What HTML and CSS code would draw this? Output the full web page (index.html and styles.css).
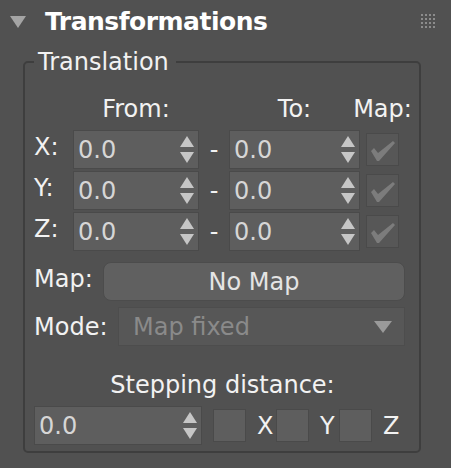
FILE: index.html
```html
<!DOCTYPE html>
<html>
<head>
<meta charset="utf-8">
<link rel="stylesheet" href="styles.css">
</head>
<body>
<div class="panel">
  <div class="rollout-head">
    <svg class="caret" width="16" height="12" viewBox="0 0 16 12"><polygon points="0,0 16,0 8,12"/></svg>
    <span class="title">Transformations</span>
    <svg class="grip" width="14" height="14" viewBox="0 0 14 14">
      <g fill="#8c8c8c">
        <rect x="0" y="0" width="2" height="2"/><rect x="4" y="0" width="2" height="2"/><rect x="8" y="0" width="2" height="2"/><rect x="12" y="0" width="2" height="2"/>
        <rect x="0" y="4" width="2" height="2"/><rect x="4" y="4" width="2" height="2"/><rect x="8" y="4" width="2" height="2"/><rect x="12" y="4" width="2" height="2"/>
        <rect x="0" y="8" width="2" height="2"/><rect x="4" y="8" width="2" height="2"/><rect x="8" y="8" width="2" height="2"/><rect x="12" y="8" width="2" height="2"/>
        <rect x="0" y="12" width="2" height="2"/><rect x="4" y="12" width="2" height="2"/><rect x="8" y="12" width="2" height="2"/><rect x="12" y="12" width="2" height="2"/>
      </g>
    </svg>
  </div>

  <fieldset class="group">
    <legend class="group-title">Translation</legend>

    <div class="xyz-grid">
      <span></span><span class="colhead">From:</span><span></span><span class="colhead">To:</span><span class="colhead map-head">Map:</span>

      <span class="axis-label">X:</span>
      <div class="spin"><span class="val">0.0</span><svg class="arrows" width="14" height="28" viewBox="0 0 14 28"><polygon points="7,0 14,11 0,11"/><polygon points="0,16 14,16 7,27"/></svg></div>
      <span class="dash">-</span>
      <div class="spin"><span class="val">0.0</span><svg class="arrows" width="14" height="28" viewBox="0 0 14 28"><polygon points="7,0 14,11 0,11"/><polygon points="0,16 14,16 7,27"/></svg></div>
      <div class="check"><svg width="33" height="33" viewBox="0 0 33 33"><polygon points="5,18 8,15 12,20 27,8 29,10 13,28 11,28"/></svg></div>

      <span class="axis-label">Y:</span>
      <div class="spin"><span class="val">0.0</span><svg class="arrows" width="14" height="28" viewBox="0 0 14 28"><polygon points="7,0 14,11 0,11"/><polygon points="0,16 14,16 7,27"/></svg></div>
      <span class="dash">-</span>
      <div class="spin"><span class="val">0.0</span><svg class="arrows" width="14" height="28" viewBox="0 0 14 28"><polygon points="7,0 14,11 0,11"/><polygon points="0,16 14,16 7,27"/></svg></div>
      <div class="check"><svg width="33" height="33" viewBox="0 0 33 33"><polygon points="5,18 8,15 12,20 27,8 29,10 13,28 11,28"/></svg></div>

      <span class="axis-label">Z:</span>
      <div class="spin"><span class="val">0.0</span><svg class="arrows" width="14" height="28" viewBox="0 0 14 28"><polygon points="7,0 14,11 0,11"/><polygon points="0,16 14,16 7,27"/></svg></div>
      <span class="dash">-</span>
      <div class="spin"><span class="val">0.0</span><svg class="arrows" width="14" height="28" viewBox="0 0 14 28"><polygon points="7,0 14,11 0,11"/><polygon points="0,16 14,16 7,27"/></svg></div>
      <div class="check"><svg width="33" height="33" viewBox="0 0 33 33"><polygon points="5,18 8,15 12,20 27,8 29,10 13,28 11,28"/></svg></div>
    </div>

    <div class="map-row">
      <span class="row-label map-label">Map:</span>
      <div class="map-button">No Map</div>
    </div>

    <div class="mode-row">
      <span class="row-label mode-label">Mode:</span>
      <div class="dropdown"><span>Map fixed</span><svg width="18" height="12" viewBox="0 0 18 12"><polygon points="0,0 18,0 9,12"/></svg></div>
    </div>

    <div class="step-title">Stepping distance:</div>
    <div class="step-row">
      <div class="spin step-spin"><span class="val">0.0</span><svg class="arrows" width="14" height="28" viewBox="0 0 14 28"><polygon points="7,0 14,11 0,11"/><polygon points="0,16 14,16 7,27"/></svg></div>
      <div class="box"></div><span class="axis">X</span>
      <div class="box"></div><span class="axis">Y</span>
      <div class="box"></div><span class="axis">Z</span>
    </div>
  </fieldset>
</div>
</body>
</html>
```

FILE: styles.css
```css
html, body {
  margin: 0;
  padding: 0;
  background: #515151;
}
body {
  font-family: "DejaVu Sans", "Liberation Sans", sans-serif;
  font-size: 24px;
  color: #f2f2f2;
  width: 451px;
  height: 468px;
  overflow: hidden;
}
.rollout-head {
  display: flex;
  align-items: center;
  height: 42px;
}
.caret {
  margin-left: 10px;
  margin-top: 2px;
  fill: #a4a4a4;
}
.title {
  margin-left: 19px;
  font-weight: bold;
  font-size: 25px;
  letter-spacing: -0.5px;
  color: #ffffff;
}
.grip {
  margin-left: auto;
  margin-right: 16px;
}
.group {
  margin: 7px 0 0 23px;
  width: 398px;
  box-sizing: border-box;
  border: 2px solid #3e3e3e;
  border-radius: 5px;
  padding: 21px 0 6px 9px;
}
.group-title {
  padding: 0 7px 0 4px;
  line-height: 26px;
  font-size: 24px;
  color: #f2f2f2;
}
.xyz-grid {
  display: grid;
  grid-template-columns: 39px 126px 30px 131px 39px;
  grid-template-rows: 32px 39px 39px 39px;
  row-gap: 2px;
  align-items: center;
}
.colhead {
  align-self: start;
  text-align: center;
  line-height: 26px;
  white-space: nowrap;
}
.map-head {
  justify-self: center;
  margin-left: 6px;
}
.axis-label {
  line-height: 26px;
  margin-top: -5px;
}
.dash {
  text-align: center;
  line-height: 26px;
}
.spin {
  box-sizing: border-box;
  height: 39px;
  background: #5e5e5e;
  border: 1px solid #4a4a4a;
  display: flex;
  align-items: center;
  justify-content: space-between;
  padding: 0 4px 0 4px;
}
.spin .val {
  color: #d6d6d6;
  line-height: 26px;
}
.arrows {
  fill: #c6c6c6;
}
.check {
  justify-self: end;
  width: 33px;
  height: 33px;
  box-sizing: border-box;
  background: #575757;
  border: 1px solid #4a4a4a;
}
.check svg {
  display: block;
  margin: -1px;
  fill: #7c7c7c;
}
.map-row, .mode-row {
  display: flex;
  align-items: center;
}
.map-row {
  margin-top: 11px;
}
.row-label {
  line-height: 26px;
}
.map-label {
  width: 69px;
  margin-top: -6px;
}
.map-button {
  width: 302px;
  height: 39px;
  box-sizing: border-box;
  background: #606060;
  border: 1px solid #4c4c4c;
  border-radius: 8px;
  display: flex;
  align-items: center;
  justify-content: center;
  color: #e4e4e4;
}
.mode-row {
  margin-top: 6px;
}
.mode-label {
  width: 84px;
}
.dropdown {
  width: 287px;
  height: 39px;
  box-sizing: border-box;
  background: #575757;
  border: 1px solid #4d4d4d;
  display: flex;
  align-items: center;
  justify-content: space-between;
  padding: 0 12px 0 14px;
  color: #8a8a8a;
}
.dropdown svg {
  fill: #9a9a9a;
}
.step-title {
  margin-top: 26px;
  line-height: 26px;
  text-align: center;
  width: 377px;
  white-space: nowrap;
}
.step-row {
  display: flex;
  align-items: center;
  margin-top: 8px;
}
.step-spin {
  width: 168px;
  margin-right: 11px;
}
.box {
  width: 33px;
  height: 33px;
  box-sizing: border-box;
  background: #5e5e5e;
  border: 1px solid #4a4a4a;
}
.axis {
  width: 30px;
  box-sizing: border-box;
  padding-left: 11px;
  line-height: 26px;
}
```
